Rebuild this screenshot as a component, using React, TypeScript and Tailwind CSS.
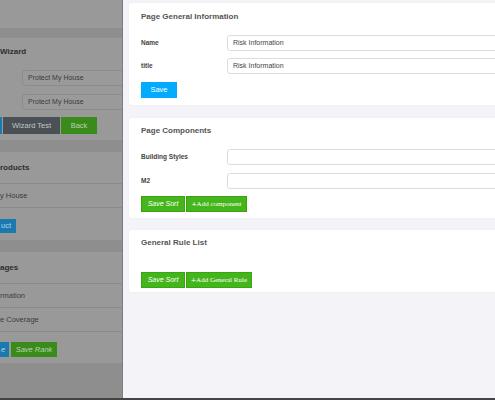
import type { ReactNode } from 'react';

const SANS = 'font-["Liberation_Sans",Arial,sans-serif]';

// Dimmed page behind the drawer (colours already include the overlay)
function DimCard({ children, className = '' }: { children: ReactNode; className?: string }) {
  return <div className={`bg-[#999999] w-[180px] ${className}`}>{children}</div>;
}

function DimRow({ text }: { text: string }) {
  return (
    <div className="h-[24px] flex items-center border-b border-[#8a8a8a] text-[7.5px] text-[#3c3c3c] whitespace-nowrap">
      {text}
    </div>
  );
}

function DimInput({ value }: { value: string }) {
  return (
    <div className="ml-[22px] h-[16px] border border-[#8c8c8c] rounded-[3px] bg-[#9a9a9a] flex items-center pl-[5px] text-[7px] text-[#3a3a3a]">
      {value}
    </div>
  );
}

function BackgroundPage() {
  return (
    <div className="w-[123px] shrink-0 bg-[#8e8e8e] border-r border-[#7c7c7c] overflow-hidden flex flex-col">
      <DimCard className="h-[28px]" />

      <DimCard className="mt-[10px] h-[102px] pt-[7px]">
        <div className="h-[14px] flex items-center text-[8px] font-bold text-[#2e2e2e]">Wizard</div>
        <div className="mt-[11px] flex flex-col gap-[8px]">
          <DimInput value="Protect My House" />
          <DimInput value="Protect My House" />
        </div>
        <div className="mt-[7px] flex h-[17px] text-[7.5px]">
          <div className="w-[2px] bg-[#1a7aaf]" />
          <div className="ml-[1px] w-[57px] bg-[#4a5056] text-[#c4c4c4] flex items-center justify-center">Wizard Test</div>
          <div className="ml-[1px] w-[36px] bg-[#3a8a1c] text-[#b9d4b0] flex items-center justify-center">Back</div>
        </div>
      </DimCard>

      <DimCard className="mt-[12px] h-[88px]">
        <div className="h-[32px] flex items-center border-b border-[#8a8a8a] text-[8px] font-bold text-[#2e2e2e]">roducts</div>
        <DimRow text="y House" />
        <div className="mt-[11px] w-[16px] h-[14px] bg-[#1a7aaf] text-[7.5px] text-[#b8d4e6] flex items-center pl-[1px]">uct</div>
      </DimCard>

      <DimCard className="mt-[12px] h-[111px]">
        <div className="h-[32px] flex items-center border-b border-[#8a8a8a] text-[8px] font-bold text-[#2e2e2e]">ages</div>
        <DimRow text="rmation" />
        <DimRow text="e Coverage" />
        <div className="mt-[10px] flex h-[15px] text-[7.5px] italic">
          <div className="w-[9px] bg-[#1a7aaf] text-[#b8d4e6] flex items-center pl-[1px]">e</div>
          <div className="ml-[2px] w-[46px] bg-[#3a8a1c] text-[#b9d4b0] flex items-center justify-center">Save Rank</div>
        </div>
      </DimCard>
    </div>
  );
}

function Field({ label, value = '' }: { label: string; value?: string }) {
  return (
    <div className="flex items-center h-[16px]">
      <div className="w-[86px] shrink-0 text-[6.5px] font-bold text-[#444]">{label}</div>
      <div className="flex-1 h-[16px] border border-[#dcdcdc] rounded-[3px] bg-white flex items-center pl-[5px] text-[7px] text-[#444]">
        {value}
      </div>
    </div>
  );
}

function Card({ title, children, className = '' }: { title: string; children: ReactNode; className?: string }) {
  return (
    <div className={`bg-white rounded-[2px] shadow-[0_0_2px_rgba(0,0,0,0.06)] px-[12px] ${className}`}>
      <div className="text-[8px] font-bold text-[#555] leading-[12px]">{title}</div>
      {children}
    </div>
  );
}

function GreenBtn({ children, serif = false, className = '' }: { children: ReactNode; serif?: boolean; className?: string }) {
  return (
    <button
      className={`h-[16px] bg-[#45b51c] border border-[#3aa513] text-white text-[7px] flex items-center justify-center ${
        serif ? 'font-["Liberation_Serif",serif]' : 'italic'
      } ${className}`}
    >
      {children}
    </button>
  );
}

export default function App() {
  return (
    <div className={`relative w-[495px] h-[400px] overflow-hidden flex ${SANS}`}>
      <BackgroundPage />

      <div className="flex-1 bg-[#f4f4f8] overflow-hidden pl-[6px] pt-[3px]">
        <div className="w-[420px] flex flex-col">
          <Card title="Page General Information" className="h-[102px] pt-[8px]">
            <div className="mt-[12px] flex flex-col gap-[7px]">
              <Field label="Name" value="Risk Information" />
              <Field label="title" value="Risk Information" />
            </div>
            <button className="mt-[8px] w-[36px] h-[16px] bg-[#03abff] text-white text-[7.5px] flex items-center justify-center">
              Save
            </button>
          </Card>

          <Card title="Page Components" className="mt-[13px] h-[100px] pt-[7px]">
            <div className="mt-[12px] flex flex-col gap-[8px]">
              <Field label="Building Styles" />
              <Field label="M2" />
            </div>
            <div className="mt-[7px] flex gap-[1px]">
              <GreenBtn className="w-[44px]">Save Sort</GreenBtn>
              <GreenBtn serif className="w-[61px]"><b className="text-[9px] leading-none">+</b>Add component</GreenBtn>
            </div>
          </Card>

          <Card title="General Rule List" className="mt-[12px] h-[62px] pt-[7px]">
            <div className="mt-[23px] flex gap-[1px]">
              <GreenBtn className="w-[44px]">Save Sort</GreenBtn>
              <GreenBtn serif className="w-[66px]"><b className="text-[9px] leading-none">+</b>Add General Rule</GreenBtn>
            </div>
          </Card>
        </div>
      </div>

      <div className="absolute left-0 right-0 bottom-0 h-[2px] bg-[#444]" />
    </div>
  );
}
